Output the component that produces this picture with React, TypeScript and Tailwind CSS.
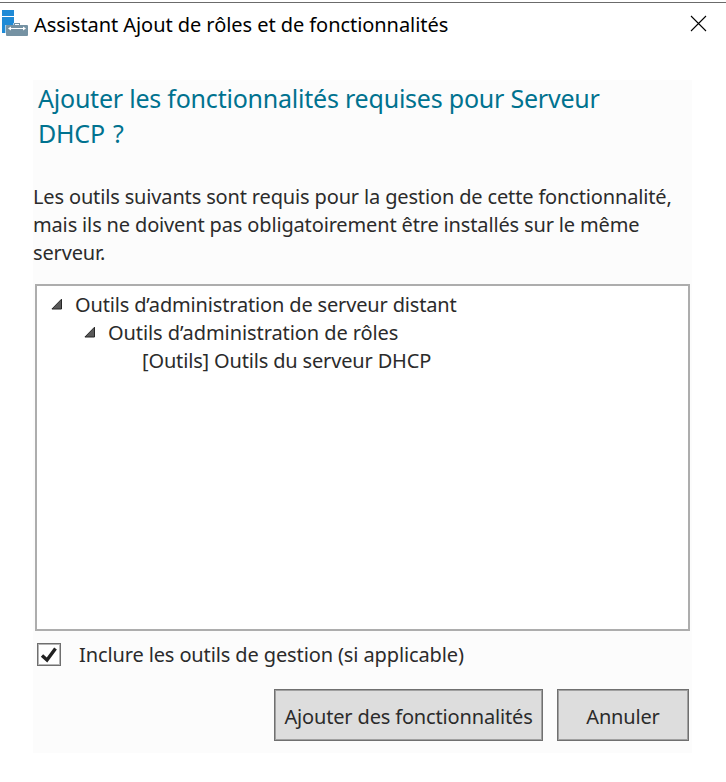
import type { ReactNode } from "react";

function ServerToolsIcon() {
  return (
    <svg width="28" height="36" viewBox="0 3 28 36" className="shrink-0">
      <path d="M2 10h12v6H2zM2 17h12v16H2z" fill="#1e8ad6" />
      <path d="M5 25h8v-2h7v2h8v11H5z" fill="#fff" opacity=".6" />
      <path d="M14 23h6v2h-1v-1h-4v1h-1z" fill="#7592a3" />
      <rect x="6" y="25" width="22" height="11" rx="1" fill="#7592a3" />
      <path d="M9 28.5h16" stroke="#fff" strokeWidth="1" />
      <path d="M8 28.5l3-2v4zM26 28.5l-3-2v4z" fill="#fff" />
    </svg>
  );
}

function Expander() {
  return (
    <svg width="12" height="12" viewBox="0 0 12 12" className="-mt-[3px] shrink-0">
      <path d="M10.5 1.2V11H.9z" fill="#595959" stroke="#262626" strokeWidth="1" />
    </svg>
  );
}

function DialogButton({ className, children }: { className: string; children: ReactNode }) {
  return (
    <button
      className={`flex h-[52px] items-center justify-center whitespace-nowrap border border-[#707070] bg-[#dddddd] pt-1 shadow-[inset_0_0_0_1px_#a0a0a0] ${className}`}
    >
      {children}
    </button>
  );
}

export default function App() {
  return (
    <div className="h-[782px] w-[726px] overflow-hidden whitespace-nowrap bg-white pt-[2px] font-['Noto_Sans',sans-serif] text-[20px] leading-7 text-[#2b2b2b]">
      <header className="flex h-[78px] items-start border-t border-[#6b6b6b] text-black">
        <div className="flex h-9 w-[34px] items-start">
          <ServerToolsIcon />
        </div>
        <h1 className="mt-[8px] grow tracking-[-0.06px]">Assistant Ajout de rôles et de fonctionnalités</h1>
        <button aria-label="Fermer" className="mr-[19px] mt-[12px]">
          <svg width="17" height="17" viewBox="0 0 17 17">
            <path d="M1 1l15 15M16 1L1 16" stroke="#000" strokeWidth="1.1" />
          </svg>
        </button>
      </header>
      <main className="ml-[33px] flex h-[673px] w-[659px] flex-col bg-[#fcfcfc]">
        <h2 className="ml-[5px] mt-px text-[25px] leading-[35px] tracking-[-0.22px] text-[#00728f]">
          Ajouter les fonctionnalités requises pour Serveur
          <br />
          <span className="[word-spacing:2px]">DHCP ?</span>
        </h2>
        <p className="mt-[32px] tracking-[-0.15px]">
          Les outils suivants sont requis pour la gestion de cette fonctionnalité,
          <br />
          mais ils ne doivent pas obligatoirement être installés sur le même
          <br />
          serveur.
        </p>
        <ul className="ml-[2px] mt-[17px] h-[347px] w-[655px] border-2 border-[#adadad] bg-white pt-[5px] tracking-[-0.16px]">
          <li className="flex items-center gap-[12px] pl-[14px]">
            <Expander />
            Outils d’administration de serveur distant
          </li>
          <li className="flex items-center gap-[12px] pl-[47px] tracking-[-0.08px]">
            <Expander />
            Outils d’administration de rôles
          </li>
          <li className="pl-[105px]">[Outils] Outils du serveur DHCP</li>
        </ul>
        <label className="ml-[4px] mt-[10px] flex h-[28px] items-center tracking-[-0.12px]">
          <span className="-mt-px flex h-[23px] w-6 items-center justify-center border border-[#6f6f6f] bg-white shadow-[inset_0_0_0_1px_#b5b5b5]">
            <svg width="18" height="18" viewBox="0 0 18 18">
              <path d="M2 9.5l5 4.5L15.5 2.5" fill="none" stroke="#212121" strokeWidth="3.4" />
            </svg>
          </span>
          <span className="ml-[18px]">Inclure les outils de gestion (si applicable)</span>
        </label>
        <div className="mr-[3px] mt-[20px] flex justify-end gap-[14px] tracking-[-0.16px]">
          <DialogButton className="w-[269px]">Ajouter des fonctionnalités</DialogButton>
          <DialogButton className="w-[132px]">Annuler</DialogButton>
        </div>
      </main>
    </div>
  );
}
